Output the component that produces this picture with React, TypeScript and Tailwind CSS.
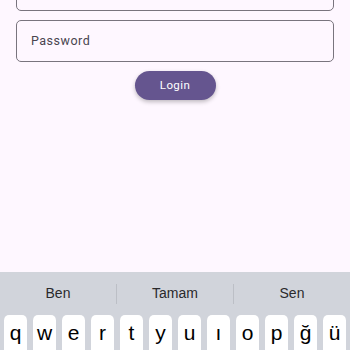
import React from 'react';

const keys = ['q', 'w', 'e', 'r', 't', 'y', 'u', 'ı', 'o', 'p', 'ğ', 'ü'];
const suggestions = ['Ben', 'Tamam', 'Sen'];

export default function App() {
  return (
    <div className="w-[350px] h-[350px] overflow-hidden bg-[#fef7ff] flex flex-col" style={{ fontFamily: 'Roboto, "Noto Sans", sans-serif' }}>
      {/* Form */}
      <div className="flex flex-col px-[16px]">
        <div className="-mt-[31px] h-[42px] rounded-[5px] border border-[#79747e]" />
        <div className="mt-[9px] h-[42px] rounded-[5px] border border-[#79747e] flex items-center px-[14px]">
          <span className="text-[12.5px] text-[#49454f] tracking-[0.5px]">Password</span>
        </div>
        <div className="flex justify-center mt-[9px]">
          <button className="w-[81px] h-[29px] rounded-full bg-[#65558f] text-white text-[11.5px] font-normal tracking-[0.4px] shadow-[0_2px_4px_rgba(0,0,0,0.25)]">
            Login
          </button>
        </div>
      </div>

      <div className="flex-1" />

      {/* Keyboard */}
      <div className="h-[78px] shrink-0 bg-[#d1d4db] flex flex-col" style={{ fontFamily: '"Liberation Sans", Inter, sans-serif' }}>
        <div className="h-[43px] shrink-0 flex items-center">
          {suggestions.map((s, i) => (
            <React.Fragment key={s}>
              {i > 0 && <div className="w-px h-[20px] bg-[#bcbfc6]" />}
              <div className="flex-1 text-center text-[14px] text-[#2a2a2c]">{s}</div>
            </React.Fragment>
          ))}
        </div>
        <div className="flex shrink-0 gap-[6px] px-[4px]">
          {keys.map((k) => (
            <div key={k} className="flex-1 h-[42px] bg-white rounded-[5px] shadow-[0_1px_0_rgba(0,0,0,0.3)] flex justify-center pt-[4px] text-[21px] text-black leading-[28px]">
              {k}
            </div>
          ))}
        </div>
      </div>
    </div>
  );
}
